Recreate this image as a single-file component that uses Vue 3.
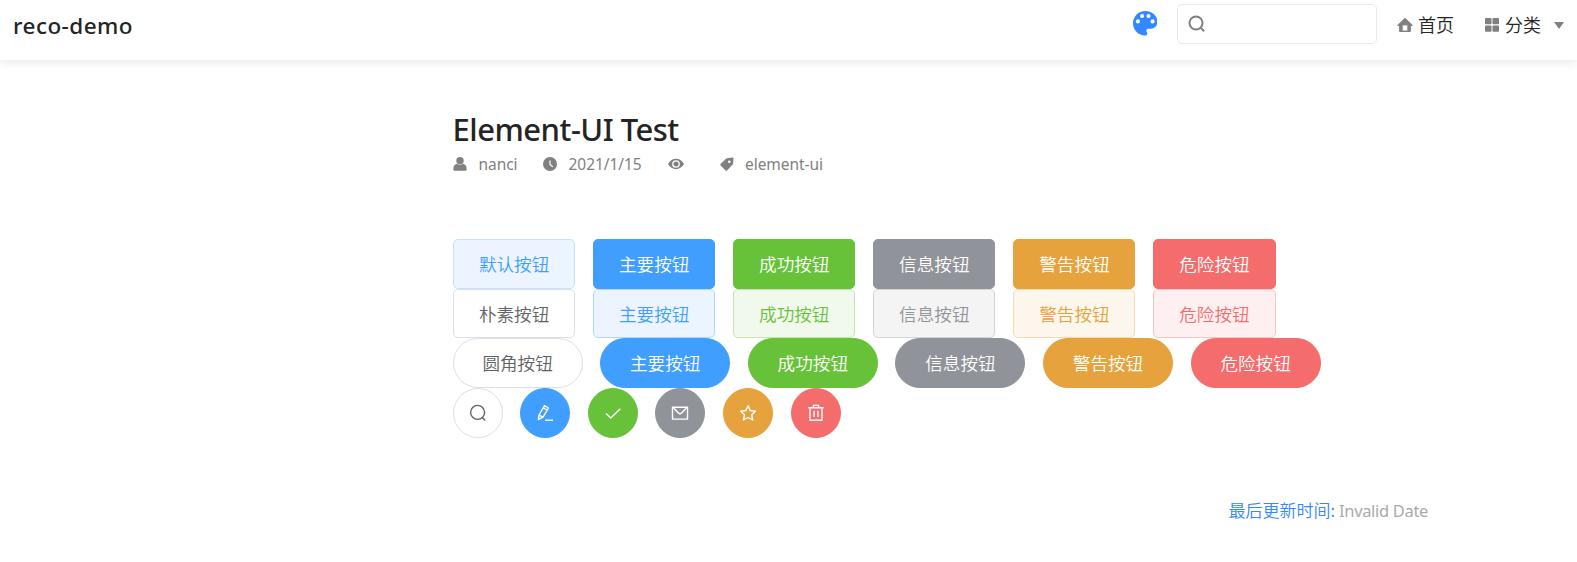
<script setup>
const types = ['primary', 'success', 'info', 'warning', 'danger']
const labels = ['主要按钮', '成功按钮', '信息按钮', '警告按钮', '危险按钮']
const rows = [
  { kind: 'solid', first: '默认按钮', firstType: 'hovered' },
  { kind: 'plain', first: '朴素按钮', firstType: 'default' },
  { kind: 'round', first: '圆角按钮', firstType: 'default' }
].map(r => ({
  kind: r.kind,
  buttons: [{ type: r.firstType, label: r.first }, ...types.map((type, i) => ({ type, label: labels[i] }))]
}))

const circles = [
  { type: 'default', d: ['M15.6 8.4a7 7 0 1 1-14 0a7 7 0 0 1 14 0Z', 'M13.2 13.400l3 3'] },
  { type: 'primary', d: ['M2.4 15.6l.6-4.5L8.5 1.7l4 2.3L7 13.2ZM7.3 3.8l4 2.3M3 11l4 2.2', 'M9 16.2h8'] },
  { type: 'success', d: ['M2 9.4l4.8 4.7L16.3 4.7'] },
  { type: 'info', d: ['M1.5 3.2h15v11.9h-15Z', 'M2.6 3.9L7.4 9q1.6 1.4 3.2 0l4.8-5.1'] },
  { type: 'warning', d: ['M9.1 1.7l2.2 4.8 5.2.7-3.8 3.6 1 5.2-4.6-2.5L4.5 16l1-5.2L1.7 7.2l5.2-.7Z'] },
  { type: 'danger', d: ['M1.2 3.8h15.6M3 3.8v12.4h12V3.8M6.4 3.6V1.4h5.2v2.2M7.1 6.8v6.1M10.9 6.8v6.1'] }
]
</script>

<template>
  <div class="page">
    <header class="navbar">
      <span class="site">reco-demo</span>
      <div class="links">
        <svg class="palette" viewBox="0 0 24 24">
          <path fill="#3388ff" d="M12 0C5.4 0 0 5.4 0 12s5.400 12 12 12c1.100 0 2-.9 2-2 0-.5-.2-1-.5-1.300-.3-.4-.5-.8-.5-1.300 0-1.100.9-2 2-2h2.400c3.700 0 6.600-3 6.600-6.700C24 4.800 18.600 0 12 0Z" />
          <g fill="#fff"><circle cx="4.800" cy="10.200" r="2" /><circle cx="8.900" cy="4.900" r="2" /><circle cx="15.200" cy="4.900" r="2" /><circle cx="19.200" cy="10.200" r="2" /></g>
        </svg>
        <div class="search">
          <svg viewBox="0 0 18 18"><circle cx="8" cy="8" r="6.500" /><path d="M12.600 12.600l3.600 3.600" /></svg>
        </div>
        <a class="home">
          <svg viewBox="0 0 16 16"><path d="M8 .8L.4 8.100c-.3.4-.1.8.4.8h1.300v5c0 .6.5 1.100 1.100 1.100h9.600c.6 0 1.100-.5 1.100-1.100v-5h1.300c.5 0 .7-.4.4-.8Z" /><path d="M5.700 8.200h4.600v5.500H5.700Z" fill="#fff" stroke="#aaa" stroke-width=".6" /></svg>
          <span>首页</span>
        </a>
        <a class="category">
          <svg viewBox="0 0 14 14"><rect width="6.500" height="6.300" rx=".8" /><rect x="7.500" width="6.500" height="6.300" rx=".8" /><rect y="7.400" width="6.500" height="6.300" rx=".8" /><rect x="7.500" y="7.400" width="6.500" height="6.300" rx=".8" /></svg>
          <span>分类</span><i class="arrow"></i>
        </a>
      </div>
    </header>

    <main class="content">
      <h1><span>Element-UI Test</span></h1>
      <div class="meta">
        <span class="item author">
          <svg viewBox="0 0 14 14"><circle cx="7" cy="3.700" r="3.700" /><path d="M3.600 6.800C1 7.800.3 9.800.3 12.600c0 .8.4 1.200 1.200 1.200h11c.8 0 1.200-.4 1.200-1.200 0-2.800-.7-4.800-3.300-5.800-1.800 1.500-5 1.500-6.800 0Z" /></svg>nanci
        </span>
        <span class="item date">
          <svg viewBox="0 0 14 14"><circle cx="7" cy="7" r="7" /><path d="M7 3.500V7.400L9.800 9.700" fill="none" stroke="#fff" stroke-width="1.200" /></svg>2021/1/15
        </span>
        <span class="item views">
          <svg viewBox="0 0 16 14"><path d="M0 7C2 3.600 4.800 1.800 8 1.800S14 3.600 16 7C14 10.400 11.200 12.200 8 12.200S2 10.400 0 7Z" /><circle cx="8" cy="7" r="3.200" fill="none" stroke="#fff" stroke-width="1.300" /></svg>
        </span>
        <span class="item tag">
          <svg viewBox="0 0 14 14"><path d="M7.300 1.200L12 .4c1-.1 1.500.4 1.500 1.300l-.4 4.800c0 .4-.2.7-.4 1L7 13.400c-.5.5-1 .5-1.500 0L.6 8.600c-.5-.5-.5-1 0-1.500l5.700-5.500c.3-.2.6-.4 1-.4Z" /><circle cx="9.300" cy="4.700" r="1.300" fill="#fff" /></svg>element-ui
        </span>
      </div>

      <div class="buttons">
        <div v-for="row in rows" :key="row.kind" class="row" :class="row.kind">
          <button v-for="b in row.buttons" :key="b.label" :class="b.type">{{ b.label }}</button>
        </div>
        <div class="row circle">
          <button v-for="c in circles" :key="c.type" :class="c.type">
            <svg viewBox="0 0 18 18"><path v-for="d in c.d" :key="d" :d="d" /></svg>
          </button>
        </div>
      </div>

      <footer class="updated"><span class="prefix">最后更新时间:</span><span class="time">Invalid Date</span></footer>
    </main>
  </div>
</template>

<style>
body { margin: 0; background: #fff; }
</style>

<style scoped>
.page { height: 562px; overflow: hidden; background: #fff; color: #242424; font-family: "Noto Sans", "Noto Sans CJK SC", sans-serif; }
.navbar { height: 60px; box-sizing: border-box; display: flex; justify-content: space-between; padding-left: 13px; box-shadow: 0 2px 10px rgba(0, 0, 0, .1); }
.site { font-size: 22.5px; line-height: 51px; font-weight: 500; letter-spacing: .45px; white-space: nowrap; }
.links { display: flex; align-items: flex-start; }
.palette { width: 24.500px; height: 24.500px; margin: 11px 20px 0 0; }
.search { box-sizing: border-box; width: 200px; height: 40px; margin-top: 4px; border: 1px solid #e9e9ed; border-radius: 5px; padding: 10px 9.500px; }
.search svg { display: block; width: 18px; height: 18px; fill: none; stroke: #808080; stroke-width: 2; }
.home, .category { height: 50px; display: flex; align-items: center; font-size: 18px; font-weight: 350; font-family: "Noto Sans CJK SC", sans-serif; }
.home span, .category span { margin-top: -2px; }
.home { margin-left: 20px; }
.home svg { width: 16px; height: 16px; fill: #808080; margin-right: 5px; }
.category { margin-left: 31px; }
.category svg { width: 14px; height: 14px; fill: #808080; margin-right: 6px; }
.arrow { margin: 0 13px 0 13px; border: 5px solid transparent; border-top: 7px solid #808080; border-bottom: 0; }
.content { width: 975px; margin-left: 453px; }
h1 { margin: 47px 0 0; height: 45px; line-height: 44px; font-size: 31px; font-weight: 500; letter-spacing: -.5px; white-space: nowrap; }
h1 span { margin-left: -.5px; }
.meta { display: flex; height: 24px; line-height: 24px; font-size: 15.5px; letter-spacing: -.05px; color: #808080; }
.item { display: flex; align-items: center; white-space: nowrap; }
.item svg { width: 14px; height: 14px; fill: #808080; margin-right: 11.500px; flex: none; }
.author { width: 90px; }
.date { width: 125px; }
.views { width: 51.500px; }
.views svg { width: 16px; }
.buttons { margin-top: 63px; }
.row { display: flex; gap: 17.950px; }
button { box-sizing: border-box; display: flex; align-items: center; justify-content: center; flex: none; padding: 0 0 2px; margin: 0; width: 122.150px; height: 50px; border: 1px solid; border-radius: 5px; font: 350 17.600px "Noto Sans CJK SC", sans-serif; }
.plain button { height: 49px; padding-bottom: 0; }
.round button { width: 130px; border-radius: 25px; }
.round, .circle { gap: 17.600px; margin-left: -.4px; }
.circle button { width: 50px; border-radius: 50%; padding: 0; }
.circle svg { width: 18px; height: 18px; fill: none; stroke: currentColor; stroke-width: 1.400; stroke-linejoin: round; }
.default { background: #fff; border-color: #dcdfe6; color: #606266; }
.hovered { background: #ecf5ff; border-color: #c6e2ff; color: #409eff; }
.primary { background: #409eff; border-color: #409eff; color: #fff; }
.success { background: #67c23a; border-color: #67c23a; color: #fff; }
.info { background: #909399; border-color: #909399; color: #fff; }
.warning { background: #e6a23c; border-color: #e6a23c; color: #fff; }
.danger { background: #f56c6c; border-color: #f56c6c; color: #fff; }
.plain .primary { background: #ecf5ff; border-color: #b3d8ff; color: #409eff; }
.plain .success { background: #f0f9eb; border-color: #c2e7b0; color: #67c23a; }
.plain .info { background: #f4f4f5; border-color: #d3d4d6; color: #909399; }
.plain .warning { background: #fdf6ec; border-color: #f5dab1; color: #e6a23c; }
.plain .danger { background: #fef0f0; border-color: #fbc4c4; color: #f56c6c; }
.updated { display: flex; justify-content: flex-end; margin-top: 60px; height: 26px; line-height: 26px; font-size: 16.500px; white-space: nowrap; }
.prefix { color: #3388ff; font-size: 17px; line-height: 24px; font-family: "Noto Sans CJK SC", sans-serif; font-weight: 350; margin-right: 4px; }
.time { color: #aaa; letter-spacing: -.33px; }
</style>
